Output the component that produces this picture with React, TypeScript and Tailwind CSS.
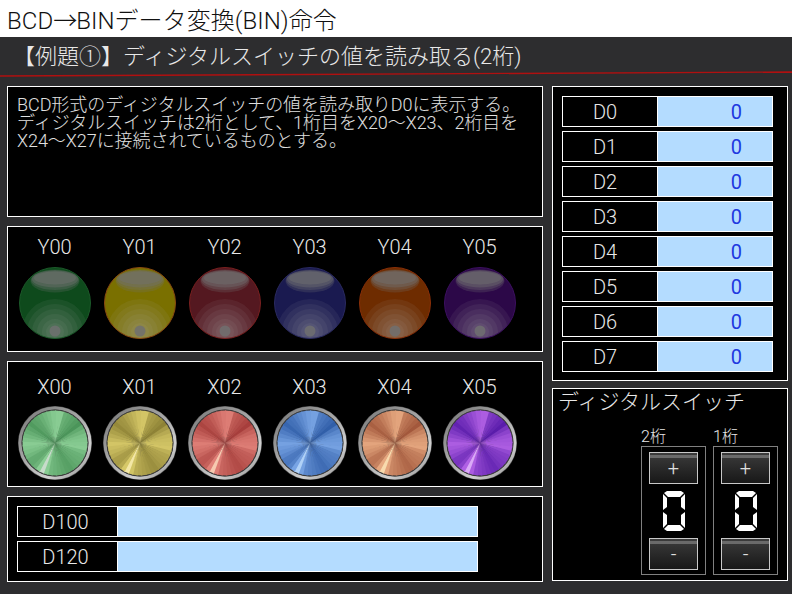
const wedgeKeys: [number, number][] = [
  [0, 0.72], [12, 0.72], [20, 0.4], [38, 0.25], [52, 0.12], [62, 0.4], [78, 0.62], [100, 0.72], [112, 0.45], [135, 0.35], [150, 0.22], [172, 0.38], [190, 0.5], [200, 0.85], [208, 1], [216, 0.5], [232, 0.3], [248, 0.55], [268, 0.72], [284, 0.5], [305, 0.22], [322, 0.3], [340, 0.5], [360, 0.72],
];
function hex(c: string) {
  return [1, 3, 5].map((i) => parseInt(c.slice(i, i + 2), 16));
}
function mix(a: string, b: string, t: number) {
  const x = hex(a);
  const y = hex(b);
  return `rgb(${x.map((v, i) => Math.round(v + (y[i] - v) * t)).join(',')})`;
}
function shade(dark: string, light: string, hi: string, v: number) {
  if (v > 0.75) return mix(light, hi, (v - 0.75) / 0.25);
  return mix(dark, light, v / 0.75);
}
function Metal({ dark, light, hi, id }: { dark: string; light: string; hi: string; id: string }) {
  const cx = 37;
  const cy = 37;
  const r = 32.5;
  const step = 8;
  const wedges = [];
  for (let a = 0; a < 360; a += step) {
    const k = wedgeKeys.findIndex((w, i) => a >= w[0] && a < wedgeKeys[i + 1][0]);
    const [a0, v0] = wedgeKeys[k];
    const [a1, v1] = wedgeKeys[k + 1];
    const v = v0 + ((v1 - v0) * (a + step / 2 - a0)) / (a1 - a0);
    const p = (d: number) => {
      const t = ((d - 90) * Math.PI) / 180;
      return `${cx + r * Math.cos(t)} ${cy + r * Math.sin(t)}`;
    };
    wedges.push(
      <path key={a} d={`M${cx} ${cy}L${p(a)}L${p(a + step + 2)}Z`} fill={shade(dark, light, hi, v)} />
    );
  }
  return (
    <svg width="76" height="76" viewBox="-1 -1 76 76" className="block">
      <defs>
        <linearGradient id={id} x1="0.1" y1="0" x2="0.9" y2="1">
          <stop offset="0" stopColor="#7c7c7c" />
          <stop offset="0.45" stopColor="#a8a8a8" />
          <stop offset="0.75" stopColor="#d0d0d0" />
          <stop offset="1" stopColor="#989898" />
        </linearGradient>
      </defs>
      <circle cx="37" cy="37" r="37" fill="#505050" />
      <circle cx="37" cy="37" r="35" fill="none" stroke={`url(#${id})`} strokeWidth="3" />
      <circle cx="37" cy="37" r="33.4" fill="#383838" />
      {wedges}
    </svg>
  );
}
function Lamp({ color, edge, id }: { color: string; edge: string; id: string }) {
  const rings = [33, 28, 23, 18, 13, 9];
  return (
    <svg width="72" height="72" viewBox="0 0 72 72" className="block">
      <defs>
        <clipPath id={id}>
          <circle cx="36" cy="36" r="35.5" />
        </clipPath>
      </defs>
      <circle cx="36" cy="36" r="35.5" fill={color} />
      <g clipPath={`url(#${id})`}>
        {rings.map((r) => (
          <circle key={r} cx="36" cy="65" r={r} fill="#b0b0b0" opacity={0.085} />
        ))}
        <circle cx="36" cy="64" r="5.5" fill="#707070" opacity="0.85" />
        <ellipse cx="36" cy="14" rx="24.5" ry="11.5" fill="#707070" opacity="0.25" />
        <ellipse cx="36" cy="13" rx="24" ry="10" fill="#707070" opacity="0.3" />
        <ellipse cx="36" cy="12" rx="23" ry="8.5" fill="#707070" opacity="0.4" />
        <ellipse cx="36" cy="11" rx="21" ry="6.5" fill="#707070" opacity="0.45" />
      </g>
      <circle cx="36" cy="36" r="35.5" fill="none" stroke={edge} strokeWidth="1" />
    </svg>
  );
}
function Digit() {
  return (
    <svg width="24" height="42" viewBox="0 0 24 42" className="block">
      <g fill="#fff">
        <polygon points="5,1 19,1 22,3 18,7 6,7 2,3" />
        <polygon points="5,41 19,41 22,39 18,35 6,35 2,39" />
        <polygon points="1,4 5,8 5,17 1,20" />
        <polygon points="23,4 19,8 19,17 23,20" />
        <polygon points="1,22 5,25 5,34 1,38" />
        <polygon points="23,22 19,25 19,34 23,38" />
      </g>
    </svg>
  );
}
function Btn({ label }: { label: string }) {
  return (
    <div className="h-[32px] w-[49px] border border-[#c8c8c8] bg-gradient-to-b from-[#3c3c3c] to-[#181818] flex items-center justify-center relative">
      <div className="absolute top-[2px] left-0 right-0 h-[3px] bg-[#6a6a6a]" />
      <span className="text-[20px] leading-none text-[#e0e0e0]">{label}</span>
    </div>
  );
}
function SwitchCol({ label }: { label: string }) {
  return (
    <div className="flex flex-col w-[65px]">
      <div className="h-[18px] text-[16px] leading-[18px] text-[#e8e8e8]">{label}</div>
      <div className="h-[129px] border border-[#808080] flex flex-col items-center pt-[5px]">
        <Btn label="+" />
        <div className="h-[54px] flex items-center justify-center pl-[1px]">
          <Digit />
        </div>
        <Btn label="-" />
      </div>
    </div>
  );
}
function Row({ label, value, labelW, w }: { label: string; value?: string; labelW: string; w: string }) {
  return (
    <div className={`h-[31px] flex border border-white ${w}`}>
      <div className={`${labelW} shrink-0 flex items-center justify-center border-r border-white text-[20px] text-[#e8e8e8]`}>
        {label}
      </div>
      <div className="flex-1 bg-[#b4dcff] flex items-center justify-end pr-[30px] text-[20px] font-normal text-[#2038e0]">{value}</div>
    </div>
  );
}
const lamps = [
  ['Y00', '#0e4a1c', '#1c5a2a'],
  ['Y01', '#7a7000', '#8a4a10'],
  ['Y02', '#541820', '#7a2020'],
  ['Y03', '#1a1a50', '#2a2a60'],
  ['Y04', '#6e2c00', '#8a3008'],
  ['Y05', '#2c0848', '#3c1060'],
];
const metals = [
  ['X00', '#3f8a4e', '#8ccf96', '#e0e0e0'],
  ['X01', '#80752c', '#d6c868', '#fff4c0'],
  ['X02', '#9c3230', '#e08078', '#ffe8c8'],
  ['X03', '#24529e', '#78a4e4', '#c8e4ff'],
  ['X04', '#96492f', '#e6a880', '#fff0c0'],
  ['X05', '#4a10a0', '#b060e4', '#ecc8ff'],
];
const panel = 'border border-white bg-black';
export default function App() {
  return (
    <div className="w-[792px] h-[594px] bg-[#2d2d2f] overflow-hidden flex flex-col font-['Roboto','Noto_Sans_CJK_JP',sans-serif] font-light text-[#e8e8e8]">
      <div className="h-[37px] bg-white text-[#111] text-[24px] leading-[37px] pl-[7px] tracking-[0.05px] whitespace-nowrap">
        BCD<span className="font-['Noto_Sans_CJK_JP'] tracking-[-1px]">→</span>BINデータ変換(BIN)命令
      </div>
      <div className="h-[34px] text-[22px] leading-[40px] pl-[13px] whitespace-nowrap">
        【例題①】ディジタルスイッチの値を読み取る(2桁)
      </div>
      <svg width="792" height="6" viewBox="0 0 792 6" className="block shrink-0">
        <line x1="0" y1="5" x2="792" y2="1" stroke="#b01010" strokeWidth="1.4" />
      </svg>
      <div className="flex gap-[9px] pl-[7px] pt-[9px]">
        <div className="w-[536px] flex flex-col gap-[9px]">
          <div className={`${panel} h-[131px] pl-[9px] pt-[9px] text-[18px] leading-[18px] tracking-[-0.05px] text-[#e0e0e0] whitespace-nowrap`}>
            <div>BCD形式のディジタルスイッチの値を読み取りD0に表示する。</div>
            <div>ディジタルスイッチは2桁として、1桁目をX20～X23、2桁目を</div>
            <div>X24～X27に接続されているものとする。</div>
          </div>
          <div className={`${panel} h-[126px] pl-[9px] flex gap-[10px]`}>
            {lamps.map(([n, c, e]) => (
              <div key={n} className="w-[75px] flex flex-col items-center">
                <div className="h-[40px] leading-[40px] text-[20px]">{n}</div>
                <Lamp color={c} edge={e} id={`lamp${n}`} />
              </div>
            ))}
          </div>
          <div className={`${panel} h-[126px] pl-[9px] flex gap-[10px]`}>
            {metals.map(([n, d, l, h]) => (
              <div key={n} className="w-[75px] flex flex-col items-center">
                <div className="h-[43px] pt-[5px] leading-[40px] text-[20px]">{n}</div>
                <Metal dark={d} light={l} hi={h} id={`metal${n}`} />
              </div>
            ))}
          </div>
          <div className={`${panel} h-[86px] pl-[9px] pt-[9px] flex flex-col gap-[4px]`}>
            <Row label="D100" labelW="w-[100px] pr-[4px]" w="w-[461px]" />
            <Row label="D120" labelW="w-[100px] pr-[4px]" w="w-[461px]" />
          </div>
        </div>
        <div className="w-[236px] flex flex-col gap-[7px]">
          <div className={`${panel} h-[295px] pl-[9px] pt-[9px] flex flex-col gap-[4px]`}>
            {['D0', 'D1', 'D2', 'D3', 'D4', 'D5', 'D6', 'D7'].map((d) => (
              <Row key={d} label={d} value="0" labelW="w-[95px] pr-[10px]" w="w-[211px]" />
            ))}
          </div>
          <div className={`${panel} h-[193px] flex flex-col`}>
            <div className="h-[39px] pl-[5px] text-[21px] leading-[27px]">ディジタルスイッチ</div>
            <div className="flex justify-end gap-[7px] pr-[9px]">
              <SwitchCol label="2桁" />
              <SwitchCol label="1桁" />
            </div>
          </div>
        </div>
      </div>
    </div>
  );
}
